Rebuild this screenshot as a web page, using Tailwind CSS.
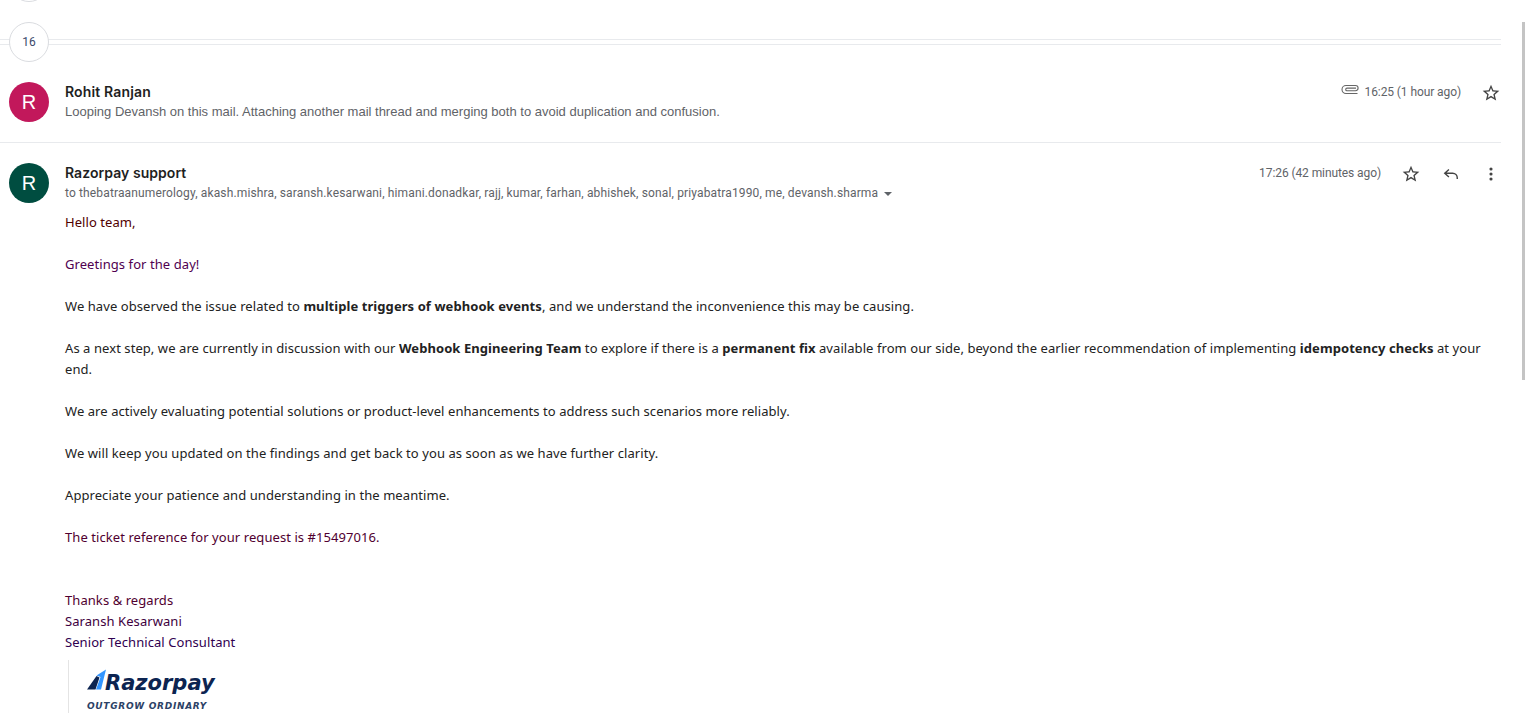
<!DOCTYPE html>
<html lang="en">
<head>
  <meta charset="UTF-8" />
  <title>Gmail thread</title>
  <script src="https://cdn.jsdelivr.net/npm/@tailwindcss/browser@4"></script>
</head>
<body class="bg-white h-[723px] overflow-hidden relative font-['Roboto',sans-serif]">
  <!-- scrollbar -->
  <div class="absolute right-0 top-[22px] w-[3px] h-[358px] bg-[#c4c4c4]"></div>

  <div class="w-[1501px]">
    <!-- stub of the previous circle -->
    <div class="h-[22px] pl-[9px]">
      <div class="w-10 h-[2px] overflow-hidden"><div class="w-10 h-10 -mt-[38px] rounded-full border border-[#dadce0]"></div></div>
    </div>

    <!-- collapsed count -->
    <div class="relative h-10">
      <div class="absolute left-0 right-0 top-[17px] h-[6px] border-y border-[#e8eaed]"></div>
      <div class="absolute left-[9px] top-0 w-10 h-10 rounded-full border border-[#dadce0] bg-white flex items-center justify-center text-xs text-[#3c4a6b]">16</div>
    </div>

    <!-- Rohit row -->
    <div class="h-[81px] border-b border-[#e8eaed] flex pl-[9px] pt-5">
      <div class="w-10 h-10 rounded-full bg-[#c2185b] text-white text-[20px] font-['Liberation_Sans',sans-serif] flex items-center justify-center">R</div>
      <div class="ml-4 flex-1">
        <div class="text-sm leading-5 font-semibold text-[#1f1f1f] font-['Inter',sans-serif] tracking-[0.15px]">Rohit Ranjan</div>
        <div class="text-[13px] leading-5 text-[#5f6368] font-['Liberation_Sans',sans-serif]">Looping Devansh on this mail. Attaching another mail thread and merging both to avoid duplication and confusion.</div>
      </div>
      <div class="flex items-start">
        <svg class="w-[18px] h-[12px] mt-[2px] mr-[6px]" viewBox="0 0 18 12" fill="none" stroke="#666" stroke-width="1.1"><path d="M16.5 9.5H5a4 4 0 0 1 0-8h9.5a2.6 2.6 0 0 1 0 5.2H6a1.3 1.3 0 0 1 0-2.6h9"/></svg>
        <span class="text-xs leading-5 text-[#5f6368] tracking-[-0.09px]">16:25 (1 hour ago)</span>
        <svg class="w-5 h-5 ml-[20px] mt-px" viewBox="0 0 24 24" fill="#444"><path d="M22 9.24l-7.19-.62L12 2 9.19 8.63 2 9.24l5.46 4.73L5.82 21 12 17.27 18.18 21l-1.63-7.03L22 9.24zM12 15.4l-3.76 2.27 1-4.28-3.32-2.88 4.38-.38L12 6.1l1.71 4.04 4.38.38-3.32 2.88 1 4.28L12 15.4z"/></svg>
      </div>
    </div>

    <!-- Razorpay message -->
    <div class="flex pl-[9px] pt-5">
      <div class="w-10 h-10 rounded-full bg-[#004d40] text-white text-[20px] font-['Liberation_Sans',sans-serif] flex items-center justify-center shrink-0">R</div>
      <div class="ml-4 flex-1 min-w-0">
        <div class="flex items-start">
          <div class="flex-1">
            <div class="text-sm leading-5 font-semibold text-[#1f1f1f] font-['Inter',sans-serif] tracking-[0.05px]">Razorpay support</div>
            <div class="flex items-center text-xs leading-5 text-[#5f6368] tracking-[0.14px]">
              <span>to thebatraanumerology, akash.mishra, saransh.kesarwani, himani.donadkar, rajj, kumar, farhan, abhishek, sonal, priyabatra1990, me, devansh.sharma</span>
              <span class="ml-[6px] mt-px w-0 h-0 border-x-[4px] border-x-transparent border-t-[4px] border-t-[#5f6368]"></span>
            </div>
          </div>
          <span class="text-xs leading-5 text-[#5f6368] tracking-[-0.09px]">17:26 (42 minutes ago)</span>
          <svg class="w-5 h-5 ml-5 mt-px" viewBox="0 0 24 24" fill="#444"><path d="M22 9.24l-7.19-.62L12 2 9.19 8.63 2 9.24l5.46 4.73L5.82 21 12 17.27 18.18 21l-1.63-7.03L22 9.24zM12 15.4l-3.76 2.27 1-4.28-3.32-2.88 4.38-.38L12 6.1l1.71 4.04 4.38.38-3.32 2.88 1 4.28L12 15.4z"/></svg>
          <svg class="w-5 h-5 ml-5 mt-px" viewBox="0 0 24 24" fill="none" stroke="#444" stroke-width="1.7"><path d="M9.5 6.5L4.5 11l5 4.5M4.8 11H14a5.5 5.5 0 0 1 5.5 5.5V18"/></svg>
          <svg class="w-5 h-5 ml-5 mt-px" viewBox="0 0 24 24" fill="#444"><circle cx="12" cy="6" r="1.9"/><circle cx="12" cy="12" r="1.9"/><circle cx="12" cy="18" r="1.9"/></svg>
        </div>

        <div class="mt-[9px] text-[13px] leading-[21px] tracking-[0.07px] font-['Noto_Sans','Open_Sans',sans-serif] text-[#222] pr-[10px]">
          <p class="text-[#500000]">Hello team,</p>
          <p class="mt-[21px] text-[#500050]">Greetings for the day!</p>
          <p class="mt-[21px]">We have observed the issue related to <b>multiple triggers of webhook events</b>, and we understand the inconvenience this may be causing.</p>
          <p class="mt-[21px]">As a next step, we are currently in discussion with our <b>Webhook Engineering Team</b> to explore if there is a <b>permanent fix</b> available from our side, beyond the earlier recommendation of implementing <b>idempotency checks</b> at your end.</p>
          <p class="mt-[21px]">We are actively evaluating potential solutions or product-level enhancements to address such scenarios more reliably.</p>
          <p class="mt-[21px]">We will keep you updated on the findings and get back to you as soon as we have further clarity.</p>
          <p class="mt-[21px]">Appreciate your patience and understanding in the meantime.</p>
          <p class="mt-[21px] text-[#500030]">The ticket reference for your request is #15497016.</p>
          <p class="mt-[42px] text-[#500030]">Thanks &amp; regards</p>
          <p class="text-[#400040]">Saransh Kesarwani</p>
          <p class="text-[#300050]">Senior Technical Consultant</p>
        </div>

        <!-- logo -->
        <div class="mt-[7px] ml-[3px] border-l border-[#e4e4e4] h-[53px] pl-[18px] pt-[9px] w-fit">
          <div class="flex items-start h-[26px]">
            <svg class="w-[19px] h-[21px] shrink-0" viewBox="0 0 19 20"><path d="M0 20L9.5 6.5l3 1.5L8.5 20z" fill="#0c2451"/><path d="M19 0L9.5 6l4 1.5L9 20h5z" fill="#3395ff"/></svg>
            <span class="font-['DejaVu_Sans',sans-serif] font-bold italic text-[21px] leading-[23px] mt-[3px] text-[#0c2451] -ml-px">Razorpay</span>
          </div>
          <div class="mt-[7px] font-['DejaVu_Sans',sans-serif] font-bold italic text-[9px] leading-[9px] tracking-[0.7px] text-[#2c4266]">OUTGROW ORDINARY</div>
        </div>
      </div>
    </div>
  </div>
</body>
</html>
